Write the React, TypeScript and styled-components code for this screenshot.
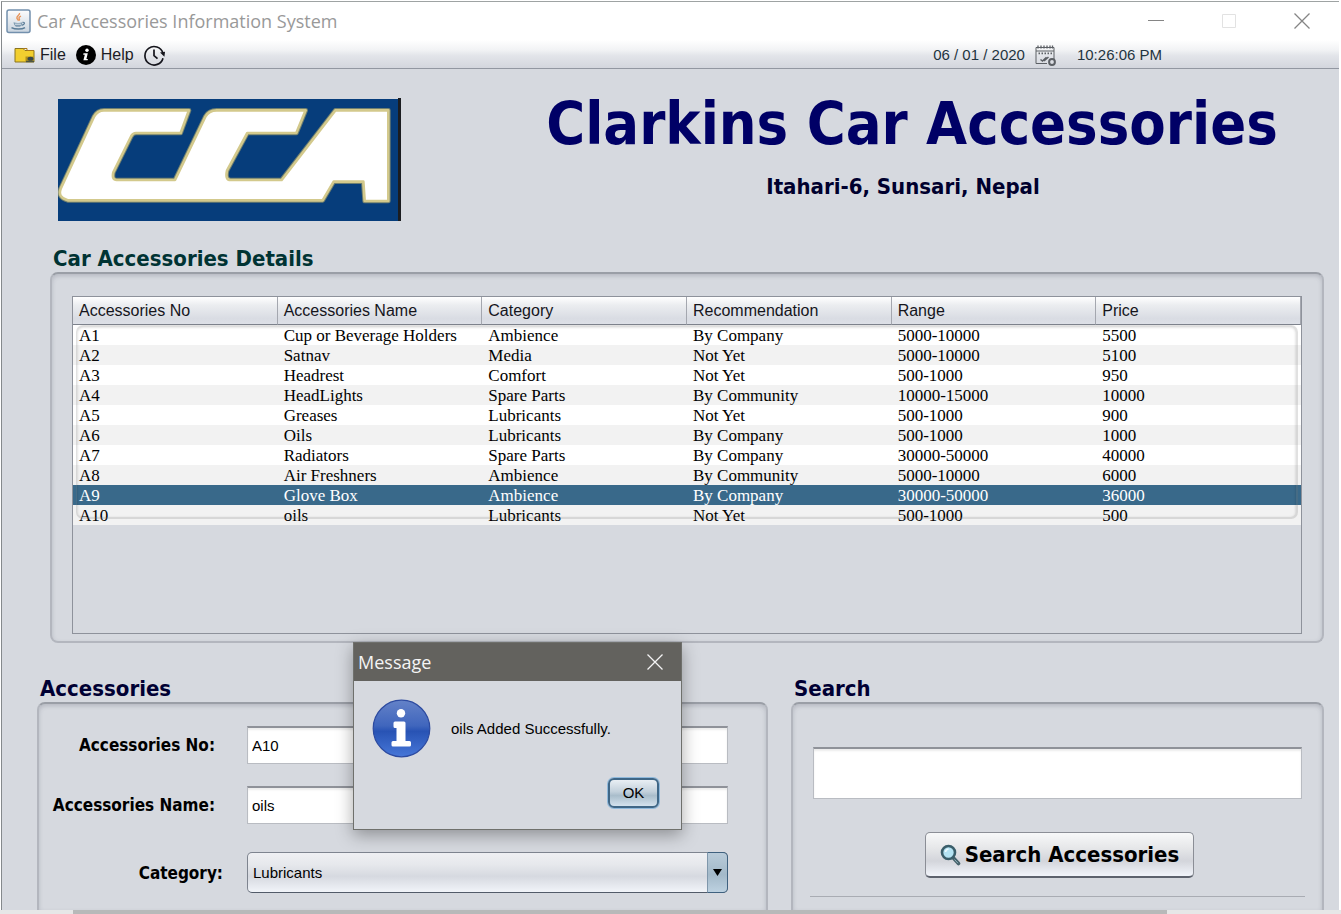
import React from "react";
import styled, { createGlobalStyle, css } from "styled-components";

const BG = "#d6d9df";
const SANS = '"Liberation Sans", Arial, sans-serif';
const SERIF = '"Liberation Serif", "Times New Roman", serif';
const BOLD = '"DejaVu Sans Condensed", "DejaVu Sans", Tahoma, sans-serif';
const FRAME = '"Open Sans", "Noto Sans", "Segoe UI", sans-serif';

const GlobalStyle = createGlobalStyle`
  *, *::before, *::after { box-sizing: border-box; }
  body { margin: 0; background: #fff; font-family: ${SANS}; font-size: 15px; color: #000; }
  h1, h2, p { margin: 0; }
  button, input, select { font: inherit; color: inherit; }
`;

const Screen = styled.div`
  height: 100vh;
  display: flex;
  flex-direction: column;
  overflow: hidden;
  padding-top: 1px;
`;

const Window = styled.div`
  position: relative;
  flex: 1;
  min-height: 0;
  display: flex;
  flex-direction: column;
  margin: 0 2px 0 1px;
  border-top: 1px solid #9ea3a3;
  border-left: 1px solid #85898c;
  background: ${BG};
  overflow: hidden;
`;

const TitleBar = styled.header`
  flex: none;
  height: 38px;
  display: flex;
  align-items: center;
  gap: 6px;
  padding: 0 29px 0 4px;
  background: #fff;
`;

const WindowTitle = styled.span`
  flex: 1;
  font-family: ${FRAME};
  font-size: 18px;
  line-height: 24px;
  color: #999;
`;

const FrameButton = styled.button<{ $faded?: boolean }>`
  display: flex;
  padding: 0;
  border: 0;
  background: none;
  color: ${(p) => (p.$faded ? "#e2e2e2" : "#858585")};
`;

const FrameButtons = styled.div`
  display: flex;
  gap: 57px;
`;

const MenuBar = styled.nav`
  flex: none;
  height: 29px;
  display: flex;
  align-items: center;
  justify-content: space-between;
  padding: 2px 177px 0 12px;
  border-bottom: 1px solid #9297a1;
  background: linear-gradient(#ffffff, #f2f3f5 35%, #e3e5ea 55%, #d3d6dd);
`;

const MenuGroup = styled.div`
  display: flex;
  align-items: center;
  gap: 10px;
`;

const MenuItem = styled.button`
  display: flex;
  align-items: center;
  gap: 5px;
  padding: 0;
  border: 0;
  background: none;
  font-size: 16px;
  line-height: 20px;
  color: #1c1c24;
`;

const Clock = styled.div`
  display: flex;
  align-items: center;
  gap: 10px;
  font-size: 15px;
  line-height: 20px;
  color: #1f3440;
`;

const Time = styled.time`
  padding-left: 11px;
`;

const Banner = styled.div`
  flex: none;
  display: flex;
  align-items: flex-start;
  padding: 29px 0 0 56px;
`;

const BannerText = styled.div`
  flex: 1;
  display: flex;
  flex-direction: column;
  align-items: center;
  padding-left: 84px;
  white-space: nowrap;
  font-family: ${BOLD};
  font-weight: bold;
`;

const ShopName = styled.h1`
  font-size: 59px;
  line-height: 52px;
  color: #000066;
`;

const Address = styled.p`
  padding: 24px 18px 0 0;
  font-size: 22px;
  line-height: 26px;
  color: #00002e;
`;

const SectionTitle = styled.h2<{ $tone?: string }>`
  padding: 2px 0 0 3px;
  font-family: ${BOLD};
  font-size: 22px;
  line-height: 26px;
  color: ${(p) => p.$tone || "#000033"};
`;

const groove = css`
  border: 2px solid #b3b6be;
  border-top-color: #9a9ea6;
  border-radius: 8px;
  box-shadow: inset 0 2px 4px rgba(80, 85, 100, 0.24);
`;

const Details = styled.section`
  flex: none;
  padding: 23px 15px 0 48px;
`;

const DetailsPanel = styled.div`
  ${groove}
  height: 371px;
  padding: 22px 20px 6px;
`;

const TableView = styled.div`
  position: relative;
  height: 338px;
  border: 1px solid #8e929b;
`;

const Table = styled.table`
  width: 100%;
  table-layout: fixed;
  border-collapse: separate;
  border-spacing: 0;
`;

const HeadCell = styled.th`
  height: 28px;
  padding: 0 6px;
  border-right: 1px solid #a4a7af;
  border-bottom: 1px solid #7d828c;
  background: linear-gradient(#ffffff, #ebedf0 30%, #d9dce3 80%, #dde0e7);
  font-size: 16px;
  font-weight: normal;
  line-height: 20px;
  text-align: left;
  color: #15151c;
`;

const Row = styled.tr<{ $selected?: boolean }>`
  background: #fff;
  &:nth-child(even) { background: #f2f2f2; }
  ${(p) =>
    p.$selected &&
    css`
      && { background: #39698a; color: #fff; }
    `}
`;

const Cell = styled.td`
  height: 20px;
  padding: 2px 6px 0;
  font-family: ${SERIF};
  font-size: 17px;
  line-height: 18px;
  white-space: nowrap;
`;

const TextOutline = styled.div`
  position: absolute;
  inset: 28px 3px 114px 3px;
  border: 1px solid rgba(120, 120, 120, 0.22);
  border-width: 1px 2px 2px 1px;
  border-radius: 7px;
  box-shadow: inset 0 1px 3px rgba(0, 0, 0, 0.2);
  pointer-events: none;
`;

const Lower = styled.div`
  flex: 1;
  min-height: 0;
  display: grid;
  grid-template-columns: 731fr 533fr;
  gap: 23px;
  padding: 31px 15px 0 35px;
`;

const Section = styled.section`
  display: flex;
  flex-direction: column;
  min-height: 0;
`;

const OpenPanel = styled.div`
  ${groove}
  flex: 1;
  border-bottom: 0;
  border-radius: 8px 8px 0 0;
`;

const Form = styled.form`
  display: flex;
  flex-direction: column;
  gap: 22px;
  padding: 22px 38px 0 0;
`;

const Field = styled.div<{ $choice?: boolean }>`
  display: grid;
  grid-template-columns: 208px 1fr;
  align-items: center;
  padding-top: ${(p) => (p.$choice ? 6 : 0)}px;

  > label {
    padding-right: ${(p) => (p.$choice ? 24 : 32)}px;
    text-align: right;
    white-space: nowrap;
    font-family: ${BOLD};
    font-weight: bold;
    font-size: 17px;
    line-height: 24px;
  }
`;

const TextInput = styled.input`
  width: 100%;
  height: 38px;
  padding: 0 4px;
  border: 1px solid #b9bcc2;
  border-top: 2px solid #8f9299;
  border-radius: 0;
  outline: 0;
  background: #fff;
  box-shadow: inset 0 2px 2px rgba(0, 0, 0, 0.08);
`;

const SelectBox = styled.div`
  position: relative;
  display: flex;
  height: 41px;
`;

const Select = styled.select`
  appearance: none;
  width: 100%;
  padding: 0 26px 0 5px;
  border: 1px solid #7e848f;
  border-bottom-color: #525b69;
  border-radius: 5px;
  outline: 0;
  background: linear-gradient(#eff0f3, #e6e8ec 30%, #d6d9e0 60%, #f1f4f9);
`;

const SelectArrow = styled.span`
  position: absolute;
  inset: 0 0 0 auto;
  width: 21px;
  display: flex;
  align-items: center;
  justify-content: center;
  border: 1px solid #3f617f;
  border-left-color: #7f97ab;
  border-radius: 0 5px 5px 0;
  background: linear-gradient(#b9cbd9, #a3b9c9 55%, #bdd1e0);
  pointer-events: none;
`;

const SearchForm = styled.form`
  display: flex;
  flex-direction: column;
  align-items: center;
  padding: 43px 17px 0;
`;

const SearchInput = styled(TextInput)`
  width: calc(100% - 6px);
  height: 52px;
`;

const SearchButton = styled.button`
  display: flex;
  align-items: center;
  gap: 4px;
  height: 46px;
  margin: 33px 0 18px 4px;
  padding: 0 14px;
  border: 1px solid #8b8e96;
  border-bottom: 2px solid #5d626d;
  border-radius: 5px;
  background: linear-gradient(#f7f8f9, #e6e7e9 35%, #d3d5db 65%, #f2f5fb);
  font-family: ${BOLD};
  font-weight: bold;
  font-size: 22px;
  line-height: 28px;
  white-space: nowrap;
`;

const Divider = styled.hr`
  width: 100%;
  margin: 0;
  border: 0;
  border-top: 1px solid #a9acb3;
`;

const Dialog = styled.div`
  position: absolute;
  left: 351px;
  top: 640px;
  width: 329px;
  border: 1px solid #6f706c;
  background: ${BG};
  box-shadow: 0 5px 16px rgba(0, 0, 0, 0.34);
`;

const DialogTitle = styled.div`
  display: flex;
  align-items: center;
  justify-content: space-between;
  height: 38px;
  padding: 0 18px 0 4px;
  background: #63625e;
  font-family: ${FRAME};
  font-size: 18px;
  line-height: 24px;
  color: #f4f4f4;
`;

const DialogClose = styled(FrameButton)`
  color: #f4f4f4;
`;

const DialogMessage = styled.div`
  display: flex;
  align-items: center;
  gap: 20px;
  padding: 18px 18px 0;
  line-height: 20px;
`;

const DialogActions = styled.div`
  display: flex;
  justify-content: flex-end;
  padding: 20px 22px 21px;
`;

const OkButton = styled.button`
  width: 51px;
  height: 30px;
  padding: 0;
  border: 2px solid #3f6787;
  border-radius: 6px;
  background: linear-gradient(#e9eff4, #c2d0db 45%, #a9bdcb 60%, #d3e2ee);
  box-shadow: 0 0 0 1px #8fb9dc;
  font-size: 15px;
  line-height: 20px;
`;

const ScrollTrack = styled.div`
  flex: none;
  height: 4px;
  padding: 0 174px 0 73px;
  background: #e6e7e7;
`;

const ScrollThumb = styled.div`
  height: 100%;
  background: #b7b9b9;
`;

const JavaIcon = () => (
  <svg width="25" height="25" viewBox="0 0 25 25" aria-hidden="true">
    <defs>
      <linearGradient id="java" x1="0" y1="0" x2="0" y2="1">
        <stop offset="0" stopColor="#fdfdfd" />
        <stop offset="1" stopColor="#c9d4df" />
      </linearGradient>
    </defs>
    <rect x="1" y="1" width="23" height="22.500" rx="2" fill="url(#java)" stroke="#7390ad" strokeWidth="1.500" />
    <path d="M13.500 4c.8 2-3.300 3.200-2.600 5.300.3.900 1.300 1.300 1.400 2.300M15 7.200c-1.800.7-2.500 1.500-1.700 2.700.5.700.2 1.200-.3 1.700" fill="none" stroke="#e8955a" strokeWidth="1.400" />
    <path d="M7.500 13.300c2.500.8 6.500.8 9 0-.4 2.300-1.500 3.900-2.500 4.400h-4c-1.200-.7-2.200-2.200-2.500-4.400z" fill="#7f9bb1" />
    <path d="M9 15.200h6" stroke="#dfe7ee" strokeWidth="1" />
    <path d="M16.500 13.300c2.800-.4 2.600 2.400-.8 3" fill="none" stroke="#5b7d98" strokeWidth="1.200" />
    <path d="M5.500 18.600c3.500 2 10.500 1.900 13.500 0" fill="none" stroke="#5b7d98" strokeWidth="1.500" />
  </svg>
);

const FolderIcon = () => (
  <svg width="21" height="17" viewBox="0 0 21 17" aria-hidden="true">
    <path d="M1 1.500h8l2 2h9V15H1z" fill="#f2cf2f" stroke="#8a7420" strokeWidth="1" />
    <path d="M9 1.500h4v2h7" fill="none" stroke="#a8781c" strokeWidth="1" />
    <path d="M11.500 9.500h8V15h-8z" fill="#b08f1c" />
    <ellipse cx="16.500" cy="11.800" rx="3" ry="2" fill="#37474a" />
    <path d="M12 14.500h8" stroke="#4d5542" strokeWidth="1.400" />
  </svg>
);

const InfoIcon = () => (
  <svg width="20" height="20" viewBox="0 0 20 20" aria-hidden="true">
    <circle cx="10" cy="10" r="10" fill="#000" />
    <circle cx="11" cy="5.300" r="1.700" fill="#fff" />
    <path d="M7.500 8.300h4.300l-1.400 5.600h1.500l-.3 1.400H7.400l1.400-5.600H7.200z" fill="#fff" />
  </svg>
);

const HistoryIcon = () => (
  <svg width="21" height="21" viewBox="0 0 21 21" aria-hidden="true">
    <path d="M18.900 8A9.200 9.200 0 1 0 19 13.200" fill="none" stroke="#15151c" strokeWidth="1.700" />
    <path d="M16 7.600l5-.8-.6 5z" fill="#15151c" />
    <path d="M10 4.500v6.200l3.500 3" fill="none" stroke="#15151c" strokeWidth="1.700" />
  </svg>
);

const CalendarIcon = () => (
  <svg width="21" height="21" viewBox="0 0 21 21" aria-hidden="true" fill="none" stroke="#5c6065">
    <path d="M1 18.500V2.500h18v12M1 18.500h11" strokeWidth="1" />
    <path d="M1 6h18" strokeWidth="1" />
    <path d="M3 .5v3M6 .5v3M9 .5v3M12 .5v3M15 .5v3M17.500 .5v3" strokeWidth="1.300" />
    <path d="M3.500 8.300h14" strokeWidth="1.800" strokeDasharray="1.500 1.500" />
    <path d="M5.500 14.500l2 1.500 4-3.800M9 16l4.500-4" strokeWidth="1.500" />
    <circle cx="17" cy="17" r="2.900" strokeWidth="2" />
  </svg>
);

const MinimizeIcon = () => (
  <svg width="16" height="16" viewBox="0 0 16 16" aria-hidden="true">
    <path d="M0 7.500h16" stroke="currentColor" />
  </svg>
);

const MaximizeIcon = () => (
  <svg width="16" height="16" viewBox="0 0 16 16" aria-hidden="true">
    <path d="M1.500 1.500h13v13h-13z" fill="none" stroke="currentColor" />
  </svg>
);

const CloseIcon = () => (
  <svg width="16" height="16" viewBox="0 0 16 16" aria-hidden="true">
    <path d="M.5 .5l15 15M15.500 .5l-15 15" stroke="currentColor" strokeWidth="1.300" />
  </svg>
);

const SearchIcon = () => (
  <svg width="21" height="22" viewBox="0 0 21 22" aria-hidden="true">
    <path d="M13 13.500l5.500 6" stroke="#46626b" strokeWidth="3.600" strokeLinecap="round" />
    <path d="M14.500 15.500l3.500 3.700" stroke="#8fb0ba" strokeWidth="1" />
    <circle cx="8.500" cy="8.500" r="6.500" fill="#b4e3f3" stroke="#3a5e6a" strokeWidth="2.600" />
    <path d="M5.500 8a3.500 3.500 0 0 1 3-3" fill="none" stroke="#eefaff" strokeWidth="1.500" />
  </svg>
);

const MessageIcon = () => (
  <svg width="59" height="59" viewBox="0 0 59 59" aria-hidden="true">
    <defs>
      <linearGradient id="ball" x1="0" y1="0" x2="0" y2="1">
        <stop offset="0" stopColor="#6482c8" />
        <stop offset="0.450" stopColor="#4066bd" />
        <stop offset="0.550" stopColor="#2853b4" />
        <stop offset="1" stopColor="#4777d8" />
      </linearGradient>
    </defs>
    <circle cx="29.500" cy="29.500" r="28.300" fill="url(#ball)" stroke="#2c4aa0" strokeWidth="1.200" />
    <circle cx="29" cy="14.300" r="4.200" fill="#fff" />
    <path d="M23 24h9v19.500h5.500v2.500H21v-2.500h5V27.500h-3z" fill="#fff" stroke="#fff" strokeWidth="3" strokeLinejoin="round" />
  </svg>
);

const MARK =
  "M203 601Q172 592 182 566L282 350Q292 331 312 331H567L542 399H408Q399 399 394 408L340 517Q335 540 350 540H525L616 350Q626 331 650 331H917L889 399H742L681 512Q675 540 692 540H845L1006 331H1165V603H1094L1090 545H1001L968 601Z";

const Logo = () => (
  <svg width="343" height="123" viewBox="174 294 1029 369" role="img" aria-label="CCA">
    <path d="M174 297h1021v366H174z" fill="#063d7b" />
    <path d="M1194 294h10v369h-10z" fill="#1b1d20" />
    <path d={MARK} fill="#fff" stroke="#6f7f70" strokeWidth="14" strokeLinejoin="round" />
    <path d={MARK} fill="#fff" stroke="#d3c98c" strokeWidth="8" strokeLinejoin="round" />
  </svg>
);

const columns = ["Accessories No", "Accessories Name", "Category", "Recommendation", "Range", "Price"];

const rows = [
  ["A1", "Cup or Beverage Holders", "Ambience", "By Company", "5000-10000", "5500"],
  ["A2", "Satnav", "Media", "Not Yet", "5000-10000", "5100"],
  ["A3", "Headrest", "Comfort", "Not Yet", "500-1000", "950"],
  ["A4", "HeadLights", "Spare Parts", "By Community", "10000-15000", "10000"],
  ["A5", "Greases", "Lubricants", "Not Yet", "500-1000", "900"],
  ["A6", "Oils", "Lubricants", "By Company", "500-1000", "1000"],
  ["A7", "Radiators", "Spare Parts", "By Company", "30000-50000", "40000"],
  ["A8", "Air Freshners", "Ambience", "By Community", "5000-10000", "6000"],
  ["A9", "Glove Box", "Ambience", "By Company", "30000-50000", "36000"],
  ["A10", "oils", "Lubricants", "Not Yet", "500-1000", "500"],
];

const selectedNo = "A9";

export default function App() {
  return (
    <Screen>
      <GlobalStyle />
      <Window>
        <TitleBar>
          <JavaIcon />
          <WindowTitle>Car Accessories Information System</WindowTitle>
          <FrameButtons>
            <FrameButton type="button" aria-label="Minimize"><MinimizeIcon /></FrameButton>
            <FrameButton type="button" aria-label="Maximize" $faded><MaximizeIcon /></FrameButton>
            <FrameButton type="button" aria-label="Close"><CloseIcon /></FrameButton>
          </FrameButtons>
        </TitleBar>
        <MenuBar>
          <MenuGroup>
            <MenuItem type="button"><FolderIcon />File</MenuItem>
            <MenuItem type="button"><InfoIcon />Help</MenuItem>
            <MenuItem type="button" aria-label="History"><HistoryIcon /></MenuItem>
          </MenuGroup>
          <Clock>
            <time>06 / 01 / 2020</time>
            <CalendarIcon />
            <Time>10:26:06 PM</Time>
          </Clock>
        </MenuBar>

        <Banner>
          <Logo />
          <BannerText>
            <ShopName>Clarkins Car Accessories</ShopName>
            <Address>Itahari-6, Sunsari, Nepal</Address>
          </BannerText>
        </Banner>

        <Details>
          <SectionTitle $tone="#003333">Car Accessories Details</SectionTitle>
          <DetailsPanel>
            <TableView>
              <Table>
                <thead>
                  <tr>{columns.map((name) => <HeadCell key={name} scope="col">{name}</HeadCell>)}</tr>
                </thead>
                <tbody>
                  {rows.map((row) => (
                    <Row key={row[0]} $selected={row[0] === selectedNo}>
                      {row.map((value, i) => <Cell key={i}>{value}</Cell>)}
                    </Row>
                  ))}
                </tbody>
              </Table>
              <TextOutline />
            </TableView>
          </DetailsPanel>
        </Details>

        <Lower>
          <Section>
            <SectionTitle>Accessories</SectionTitle>
            <OpenPanel>
              <Form>
                <Field>
                  <label htmlFor="no">Accessories No:</label>
                  <TextInput id="no" defaultValue="A10" />
                </Field>
                <Field>
                  <label htmlFor="name">Accessories Name:</label>
                  <TextInput id="name" defaultValue="oils" />
                </Field>
                <Field $choice>
                  <label htmlFor="category">Category:</label>
                  <SelectBox>
                    <Select id="category" defaultValue="Lubricants">
                      <option>Ambience</option>
                      <option>Comfort</option>
                      <option>Lubricants</option>
                      <option>Media</option>
                      <option>Spare Parts</option>
                    </Select>
                    <SelectArrow>
                      <svg width="9" height="7" viewBox="0 0 9 7" aria-hidden="true">
                        <path d="M0 0h9L4.500 7z" fill="#000" />
                      </svg>
                    </SelectArrow>
                  </SelectBox>
                </Field>
              </Form>
            </OpenPanel>
          </Section>
          <Section>
            <SectionTitle>Search</SectionTitle>
            <OpenPanel>
              <SearchForm>
                <SearchInput type="text" aria-label="Search" />
                <SearchButton type="button"><SearchIcon />Search Accessories</SearchButton>
                <Divider />
              </SearchForm>
            </OpenPanel>
          </Section>
        </Lower>

        <Dialog role="dialog" aria-labelledby="dialog-title">
          <DialogTitle>
            <span id="dialog-title">Message</span>
            <DialogClose type="button" aria-label="Close message"><CloseIcon /></DialogClose>
          </DialogTitle>
          <DialogMessage>
            <MessageIcon />
            <p>oils Added Successfully.</p>
          </DialogMessage>
          <DialogActions>
            <OkButton type="button">OK</OkButton>
          </DialogActions>
        </Dialog>
      </Window>
      <ScrollTrack>
        <ScrollThumb />
      </ScrollTrack>
    </Screen>
  );
}
